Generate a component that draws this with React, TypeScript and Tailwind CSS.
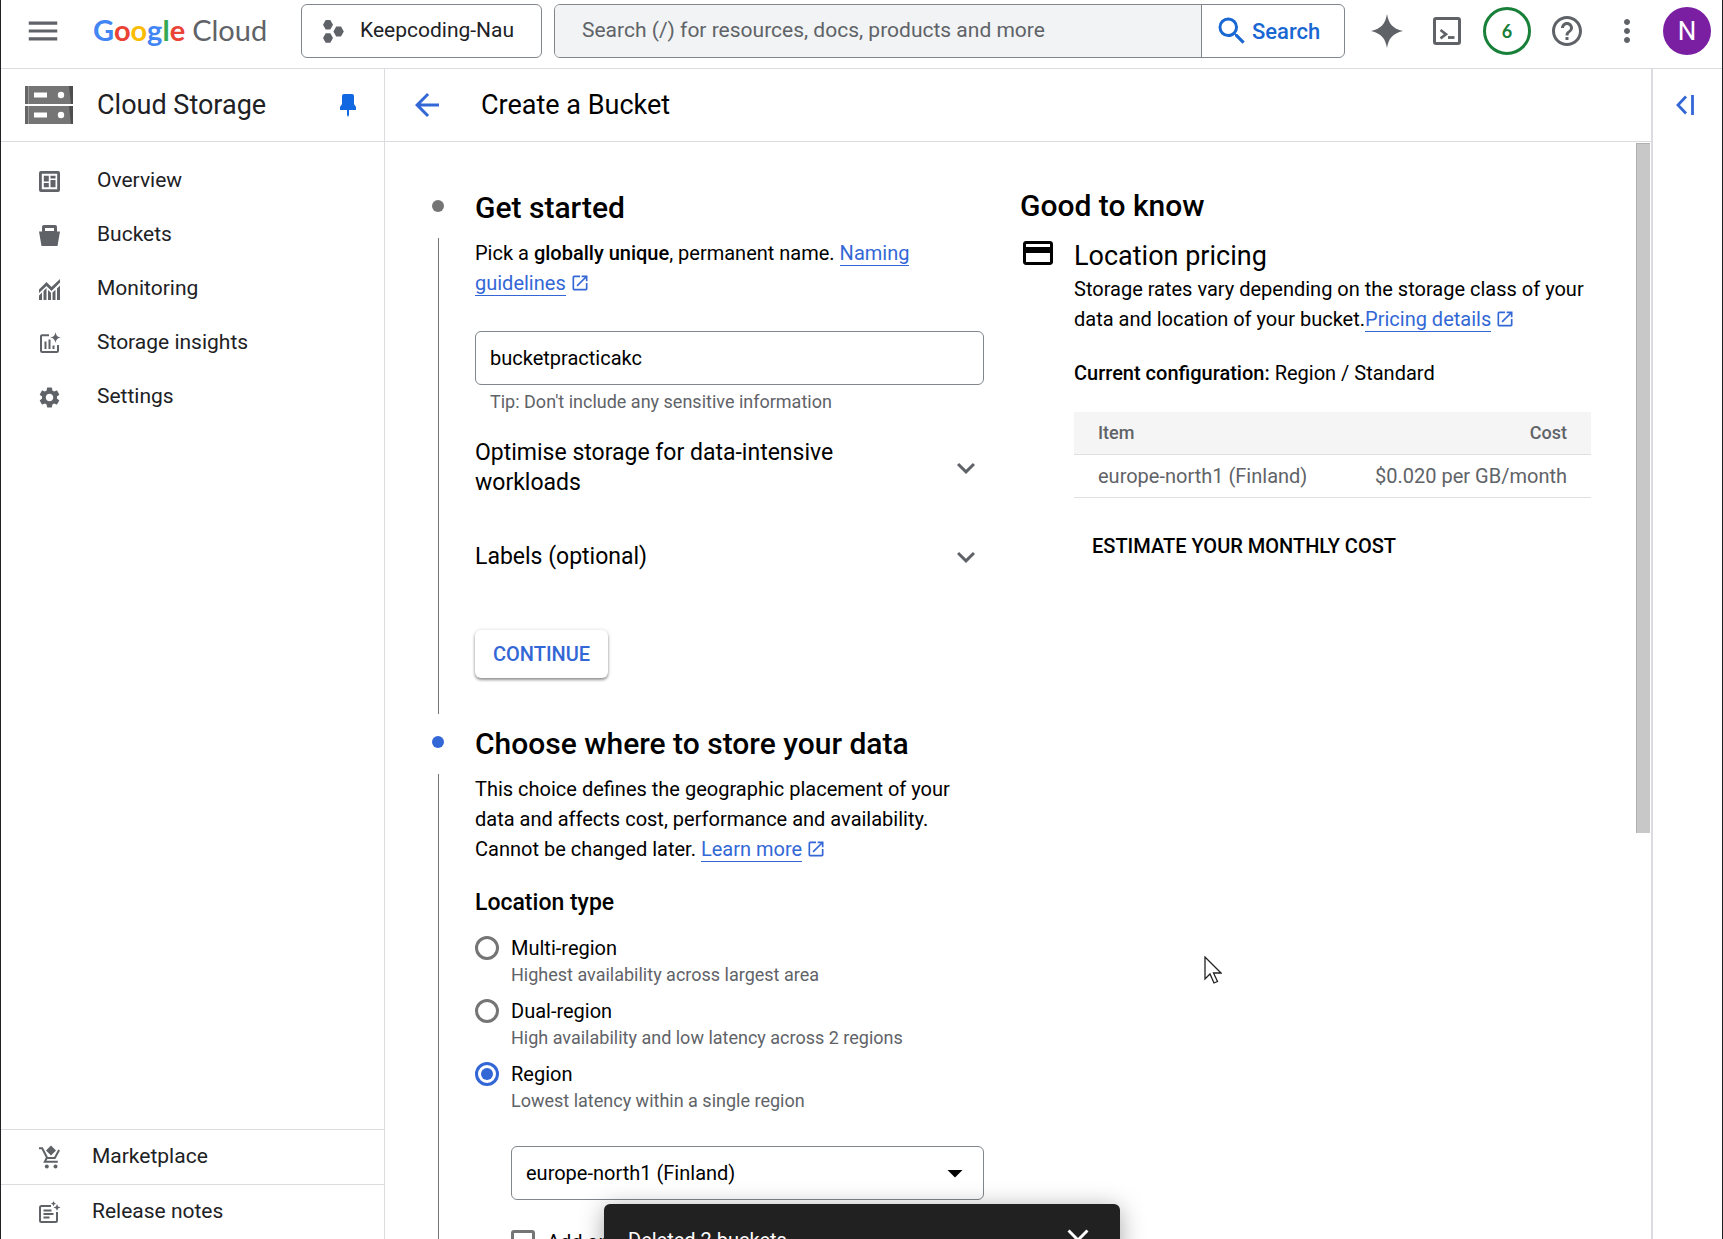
import type { ReactNode } from "react";
import {
  MdArrowBack,
  MdArrowDropDown,
  MdClose,
  MdCreditCard,
  MdExpandMore,
  MdHelpOutline,
  MdMenu,
  MdMoreVert,
  MdOpenInNew,
  MdSearch,
  MdSettings,
} from "react-icons/md";

function ProjectIcon() {
  return (
    <svg viewBox="0 0 21 23" className="h-[23px] w-[21px] fill-[#5f6368]" aria-hidden="true">
      <path d="M2.7 0h4.6L10 4.8 7.3 9.6H2.7L0 4.8zM2.7 13.2h4.6L10 18l-2.7 4.8H2.7L0 18zM13.2 6.6h4.8l2.8 4.9-2.8 4.9h-4.8l-2.8-4.9z" />
    </svg>
  );
}

function SparkleIcon() {
  return (
    <svg viewBox="0 0 32 34" className="h-[34px] w-8 fill-[#5f6368]" aria-hidden="true">
      <path d="M16 0c1.600 9.500 5.500 14.500 16 17-10.500 2.500-14.400 7.500-16 17-1.600-9.500-5.500-14.500-16-17C10.500 14.500 14.400 9.500 16 0z" />
    </svg>
  );
}

function ShellIcon() {
  return (
    <svg viewBox="0 0 28 28" className="size-7" fill="none" stroke="#5f6368" aria-hidden="true">
      <rect x="1.500" y="1.500" width="25" height="25" rx="1.500" strokeWidth="3" />
      <path d="M7.500 13l5.500 4.200-5.500 4.200" strokeWidth="2.600" />
      <path d="M15 20.500h6.500" strokeWidth="2.800" />
    </svg>
  );
}

function StorageLogo() {
  return (
    <svg viewBox="0 0 48 38" className="h-[38px] w-12 shrink-0" aria-hidden="true">
      {[0, 20].map((y) => (
        <g key={y}>
          <rect y={y} width="48" height="18" fill="#757575" />
          <rect x="3" y={y} width="1" height="18" fill="#9a9a9a" />
          <rect y={y} width="3" height="18" fill="#666" />
          <path d={y === 0 ? "M44 0h4v18h-2z" : "M44 20h4v18h-2z"} fill="#4d4d4d" />
          <rect x="9" y={y + 6.500} width="13" height="5" fill="#fff" />
          <circle cx="36" cy={y + 9} r="3.200" fill="#fff" />
        </g>
      ))}
    </svg>
  );
}

function PinIcon() {
  return (
    <svg viewBox="0 0 16 24" className="h-6 w-4 fill-[#1268e0]" aria-hidden="true">
      <path d="M4 1h8a2 2 0 0 1 2 2v8l2 3v3H9v5l-1 2-1-2v-5H0v-3l2-3V3a2 2 0 0 1 2-2z" />
    </svg>
  );
}

function NavSvg({ children }: { children: ReactNode }) {
  return (
    <svg viewBox="0 0 21 21" className="size-[21px] shrink-0 overflow-visible" fill="#5f6368" aria-hidden="true">
      {children}
    </svg>
  );
}

const overviewIcon = (
  <NavSvg>
    <path
      fillRule="evenodd"
      d="M2 0h17a2 2 0 0 1 2 2v17a2 2 0 0 1-2 2H2a2 2 0 0 1-2-2V2a2 2 0 0 1 2-2zm.8 2.800v15.400h15.400V2.800z"
    />
    <path d="M4.800 4.800h5v5.700h-5zM11.500 4.800h5v2.600h-5zM4.800 12h5v4.200h-5zM11.500 9h5v7.200h-5z" />
  </NavSvg>
);

const bucketIcon = (
  <NavSvg>
    <path
      fillRule="evenodd"
      d="M5 0h11a2 2 0 0 1 2 2v4.500h3L18.500 21h-16L0 6.500h3V2a2 2 0 0 1 2-2zm1 3v3h9V3z"
    />
  </NavSvg>
);

const monitoringIcon = (
  <NavSvg>
    <path d="M0 10.500 7.500 3l5 5L21 0v3.500L12.500 12l-5-5L0 14z" />
    <path d="M0 16.500l3-3V21H0zM4.500 12l3-3v12h-3zM9 11l3 2.800V21H9zM13.500 13.500l3-2.800V21h-3zM18 9.500l3-3V21h-3z" />
  </NavSvg>
);

const insightsIcon = (
  <NavSvg>
    <path d="M10 2.200H3.200a1.200 1.200 0 0 0-1.200 1.200v14.400A1.200 1.200 0 0 0 3.200 19h14.600a1.200 1.200 0 0 0 1.200-1.200V12" fill="none" stroke="#5f6368" strokeWidth="2" />
    <path d="M5.500 8.500h2V16h-2zM9.500 6.500h2V16h-2zM13.500 12.500h2V16h-2zM16.500-1c.6 3.500 2 5 5.500 5.500-3.500.6-4.900 2-5.500 5.500-.6-3.500-2-4.900-5.500-5.500 3.500-.5 4.900-2 5.500-5.500z" />
  </NavSvg>
);

const marketplaceIcon = (
  <NavSvg>
    <path d="M0 1.200h3.200l5 9.800h7.600l4.300-8" fill="none" stroke="#5f6368" strokeWidth="2" />
    <path d="M8 10.500l-2.200 4.300h13" fill="none" stroke="#5f6368" strokeWidth="2" />
    <path d="M12 -1.500l5 5-5 5-5-5z" />
    <circle cx="7.800" cy="19.500" r="2" />
    <circle cx="16.500" cy="19.500" r="2" />
  </NavSvg>
);

const notesIcon = (
  <NavSvg>
    <path d="M12 4H2.500A1.500 1.500 0 0 0 1 5.500v13A1.500 1.500 0 0 0 2.500 20h14a1.500 1.500 0 0 0 1.500-1.500V10" fill="none" stroke="#5f6368" strokeWidth="2" />
    <path d="M4.500 7.500h8v2h-8zM4.500 11h10v2h-10zM4.500 14.500h6v2h-6zM14.500-1l.8 1.800L17 1.600l-1.700.8-.8 1.800-.8-1.800-1.700-.8 1.700-.8zM18 2l1 2.500 2.500 1L19 6.500 18 9l-1-2.500-2.500-1 2.500-1z" />
  </NavSvg>
);

const navItems: { label: string; icon: ReactNode }[] = [
  { label: "Overview", icon: overviewIcon },
  { label: "Buckets", icon: bucketIcon },
  { label: "Monitoring", icon: monitoringIcon },
  { label: "Storage insights", icon: insightsIcon },
  { label: "Settings", icon: <MdSettings className="size-[25px] -mx-0.5 shrink-0 text-[#5f6368]" /> },
];

const footerItems: { label: string; icon: ReactNode }[] = [
  { label: "Marketplace", icon: marketplaceIcon },
  { label: "Release notes", icon: notesIcon },
];

const locationTypes = [
  { id: "multi", title: "Multi-region", description: "Highest availability across largest area" },
  { id: "dual", title: "Dual-region", description: "High availability and low latency across 2 regions" },
  { id: "region", title: "Region", description: "Lowest latency within a single region" },
];

function ExternalLink({ children }: { children: ReactNode }) {
  return (
    <a href="#" className="text-[#3367d6]">
      <span className="border-b border-[#3367d6]">{children}</span>
      <MdOpenInNew className="ml-1 inline size-5 align-[-3px]" />
    </a>
  );
}

function Header() {
  return (
    <header className="flex h-[69px] shrink-0 items-start border-b border-[#dadce0] pr-[11px] pl-6 pt-1">
      <button aria-label="Main menu" className="flex h-[54px] w-9 items-center justify-center text-[#5f6368]">
        <MdMenu className="size-[38px] shrink-0" />
      </button>
      <a href="#" aria-label="Google Cloud" className="ml-8 flex h-[52px] w-[175px] shrink-0 items-center gap-[7px] font-['Lato'] text-[29px]">
        <span className="font-bold">
          <span className="text-[#4285f4]">G</span>
          <span className="text-[#ea4335]">o</span>
          <span className="text-[#fbbc04]">o</span>
          <span className="text-[#4285f4]">g</span>
          <span className="text-[#34a853]">l</span>
          <span className="text-[#ea4335]">e</span>
        </span>
        <span className="text-[#5f6368]">Cloud</span>
      </a>
      <button className="ml-[33px] flex h-[54px] w-[241px] shrink-0 items-center gap-4 rounded-md border border-[#80868b] pl-[21px] text-[21px] text-[#202124]">
        <ProjectIcon />
        Keepcoding-Nau
      </button>
      <form className="ml-3 flex h-[54px] min-w-0 flex-1 overflow-hidden rounded-md border border-[#80868b]" onSubmit={(e) => e.preventDefault()}>
        <input
          type="search"
          aria-label="Search"
          placeholder="Search (/) for resources, docs, products and more"
          className="min-w-0 flex-1 bg-[#f1f3f4] px-[27px] text-[21px] outline-none placeholder:text-[#5f6368]"
        />
        <button className="flex w-[143px] items-center gap-0.5 border-l border-[#80868b] pl-3 text-[22px] font-medium text-[#1967d2]">
          <MdSearch className="size-9 shrink-0" />
          Search
        </button>
      </form>
      <div className="ml-[26px] flex h-[54px] shrink-0 items-center">
        <button aria-label="Gemini"><SparkleIcon /></button>
        <button aria-label="Cloud Shell" className="ml-[30px]"><ShellIcon /></button>
        <button aria-label="Notifications" className="ml-[22px] flex size-12 items-center justify-center rounded-full border-[3px] border-[#188038] font-['Lato'] text-[18px] font-bold text-[#188038]">
          6
        </button>
        <button aria-label="Help" className="ml-[18px] text-[#5f6368]"><MdHelpOutline className="size-9" /></button>
        <button aria-label="More options" className="ml-6 text-[#5f6368]"><MdMoreVert className="size-9" /></button>
        <button aria-label="Account" className="ml-[18px] flex size-12 items-center justify-center rounded-full bg-[#7b1fa2] text-[26px] text-white">
          N
        </button>
      </div>
    </header>
  );
}

function Sidebar() {
  return (
    <nav className="flex w-[384px] shrink-0 flex-col border-r border-[#dadce0] text-[21px] text-[#202124]">
      <div className="flex h-[73px] shrink-0 items-center border-b border-[#dadce0] pr-7 pl-6">
        <StorageLogo />
        <h2 className="ml-6 flex-1 text-[27px]">Cloud Storage</h2>
        <button aria-label="Unpin menu"><PinIcon /></button>
      </div>
      <ul className="flex-1 pt-3">
        {navItems.map((item) => (
          <li key={item.label}>
            <a href="#" className="flex h-[54px] items-center gap-[37px] pl-[38px]">
              {item.icon}
              {item.label}
            </a>
          </li>
        ))}
      </ul>
      <ul>
        {footerItems.map((item) => (
          <li key={item.label} className="border-t border-[#dadce0]">
            <a href="#" className="flex h-[54px] items-center gap-8 pl-[38px]">
              {item.icon}
              {item.label}
            </a>
          </li>
        ))}
      </ul>
    </nav>
  );
}

function Step({ title, active, children }: { title: string; active?: boolean; children: ReactNode }) {
  return (
    <section className="grid grid-cols-[12px_1fr] gap-x-[31px]">
      <div className="flex flex-col items-center">
        <span className={active ? "mt-3 size-3 shrink-0 rounded-full bg-[#3367d6]" : "mt-3 size-3 shrink-0 rounded-full bg-[#757575]"} />
        <span className="mt-[26px] w-px flex-1 bg-[#757575]" />
      </div>
      <div className="min-w-0">
        <h2 className="mb-2.5 text-[30px] leading-10 font-medium">{title}</h2>
        {children}
      </div>
    </section>
  );
}

function Accordion({ label, className }: { label: string; className: string }) {
  return (
    <button className={className}>
      <span className="w-[400px] max-w-full">{label}</span>
      <MdExpandMore className="size-9 shrink-0 text-[#5f6368]" />
    </button>
  );
}

function BucketForm() {
  return (
    <form className="w-[552px] shrink-0" onSubmit={(e) => e.preventDefault()}>
      <Step title="Get started">
        <p>
          Pick a <b className="font-medium">globally unique</b>, permanent name. <ExternalLink>Naming guidelines</ExternalLink>
        </p>
        <input
          aria-label="Bucket name"
          aria-describedby="name-tip"
          defaultValue="bucketpracticakc"
          className="mt-[33px] block h-[54px] w-full rounded-md border border-[#80868b] px-3.5 outline-none"
        />
        <p id="name-tip" className="mt-[5px] pl-[15px] text-[18px] leading-6 text-[#5f6368]">
          Tip: Don't include any sensitive information
        </p>
        <Accordion
          label="Optimise storage for data-intensive workloads"
          className="mt-6 flex w-full items-center justify-between text-left text-[23px]"
        />
        <Accordion
          label="Labels (optional)"
          className="mt-[41px] flex w-full items-center justify-between text-left text-[23px]"
        />
        <button className="mt-[55px] mb-9 block h-12 rounded-md bg-white px-[18px] text-[20px] font-medium text-[#3367d6] shadow-[0_2px_3px_rgba(0,0,0,0.4),0_0_4px_rgba(0,0,0,0.12)]">
          CONTINUE
        </button>
      </Step>
      <div className="h-2.5" />
      <Step title="Choose where to store your data" active>
        <p>
          This choice defines the geographic placement of your data and affects cost, performance and availability. Cannot be changed later.{" "}
          <ExternalLink>Learn more</ExternalLink>
        </p>
        <fieldset className="mt-6">
          <legend className="mb-[15px] text-[23px] font-medium">Location type</legend>
          <div className="flex flex-col gap-[9px]">
            {locationTypes.map((type) => (
              <div key={type.id} className="grid grid-cols-[24px_1fr] items-center gap-x-3">
                <input
                  type="radio"
                  name="location-type"
                  id={type.id}
                  aria-describedby={`${type.id}-description`}
                  defaultChecked={type.id === "region"}
                  className="size-6 appearance-none rounded-full border-[3px] border-[#757575] bg-clip-content p-[3px] checked:border-[#3367d6] checked:bg-[#3367d6]"
                />
                <label htmlFor={type.id}>{type.title}</label>
                <p id={`${type.id}-description`} className="col-start-2 text-[18px] leading-6 text-[#5f6368]">
                  {type.description}
                </p>
              </div>
            ))}
          </div>
        </fieldset>
        <div className="mt-[33px] pl-9">
          <div className="relative">
            <select aria-label="Region" className="block h-[54px] w-full appearance-none rounded-md border border-[#80868b] bg-white px-3.5 outline-none">
              <option>europe-north1 (Finland)</option>
            </select>
            <MdArrowDropDown className="pointer-events-none absolute top-[9px] right-[11px] size-9" />
          </div>
          <label className="mt-[27px] flex items-center gap-3">
            <input type="checkbox" className="size-6 appearance-none rounded-[3px] border-[3px] border-[#757575]" />
            Add another
          </label>
        </div>
      </Step>
    </form>
  );
}

function GoodToKnow() {
  return (
    <aside className="ml-9 w-[571px] min-w-0">
      <h2 className="text-[30px] leading-9 font-medium">Good to know</h2>
      <div className="mt-[17px] flex items-start">
        <MdCreditCard className="-mt-[6px] size-9 shrink-0" />
        <div className="ml-[18px] min-w-0 flex-1">
          <h3 className="text-[27px]">Location pricing</h3>
          <p className="mt-[3px]">
            Storage rates vary depending on the storage class of your data and location of your bucket.
            <ExternalLink>Pricing details</ExternalLink>
          </p>
          <p className="mt-6">
            <b className="font-medium">Current configuration:</b> Region / Standard
          </p>
          <table className="mt-6 w-full text-[#5f6368]">
            <thead>
              <tr className="h-[42px] border-b border-[#e0e0e0] bg-[#f5f5f5] text-[18px]">
                <th className="pl-6 text-left font-medium">Item</th>
                <th className="pr-6 text-right font-medium">Cost</th>
              </tr>
            </thead>
            <tbody>
              <tr className="h-[43px] border-b border-[#e0e0e0]">
                <td className="pl-6">europe-north1 (Finland)</td>
                <td className="pr-6 text-right">$0.020 per GB/month</td>
              </tr>
            </tbody>
          </table>
          <button className="mt-[30px] h-9 px-[18px] font-medium">ESTIMATE YOUR MONTHLY COST</button>
        </div>
      </div>
    </aside>
  );
}

export default function App() {
  return (
    <div className="relative flex h-screen flex-col overflow-hidden border-x border-[#202124] bg-white font-['Roboto',sans-serif] text-black">
      <Header />
      <div className="flex min-h-0 flex-1">
        <Sidebar />
        <main className="flex min-w-0 flex-1 flex-col">
          <div className="flex h-[73px] shrink-0 items-center border-b border-[#dadce0] pl-6">
            <button aria-label="Back" className="text-[#3367d6]"><MdArrowBack className="size-9" /></button>
            <h1 className="ml-9 text-[27px]">Create a Bucket</h1>
          </div>
          <div className="flex min-h-0 flex-1">
            <div className="flex min-w-0 flex-1 items-start overflow-hidden pt-[46px] pl-[47px] text-[20px] leading-[30px]">
              <BucketForm />
              <GoodToKnow />
            </div>
            <div className="w-[15px] shrink-0 pt-px pr-px">
              <div className="h-[63%] border-t border-l border-[#b0b0b0] bg-[#c8c8c8]" />
            </div>
          </div>
        </main>
        <div className="w-[71px] shrink-0 border-l-2 border-[#dadce0] pt-[26px] pl-[22px]">
          <button aria-label="Show side panel" className="block">
            <svg viewBox="0 0 20 20" className="size-5" fill="none" stroke="#3367d6" strokeWidth="2.800" aria-hidden="true">
              <path d="M11 1.500 3 10l8 8.500M17.500 0v20" />
            </svg>
          </button>
        </div>
      </div>
      <div role="status" className="absolute top-[1204px] left-[603px] flex h-[72px] w-[516px] items-center justify-between rounded-md bg-[#212121] px-6 text-[20px] text-white shadow-[0_4px_24px_rgba(0,0,0,0.35)]">
        Deleted 2 buckets
        <button aria-label="Dismiss"><MdClose className="size-9" /></button>
      </div>
      <svg viewBox="0 0 18 28" className="pointer-events-none absolute top-[956px] left-[1203px] h-7 w-[18px]" fill="#fff" stroke="#222" strokeWidth="1.300" aria-hidden="true">
        <path d="M1 1v22l5-5 4 9 3.500-1.500-4-8.500H17z" />
      </svg>
    </div>
  );
}
